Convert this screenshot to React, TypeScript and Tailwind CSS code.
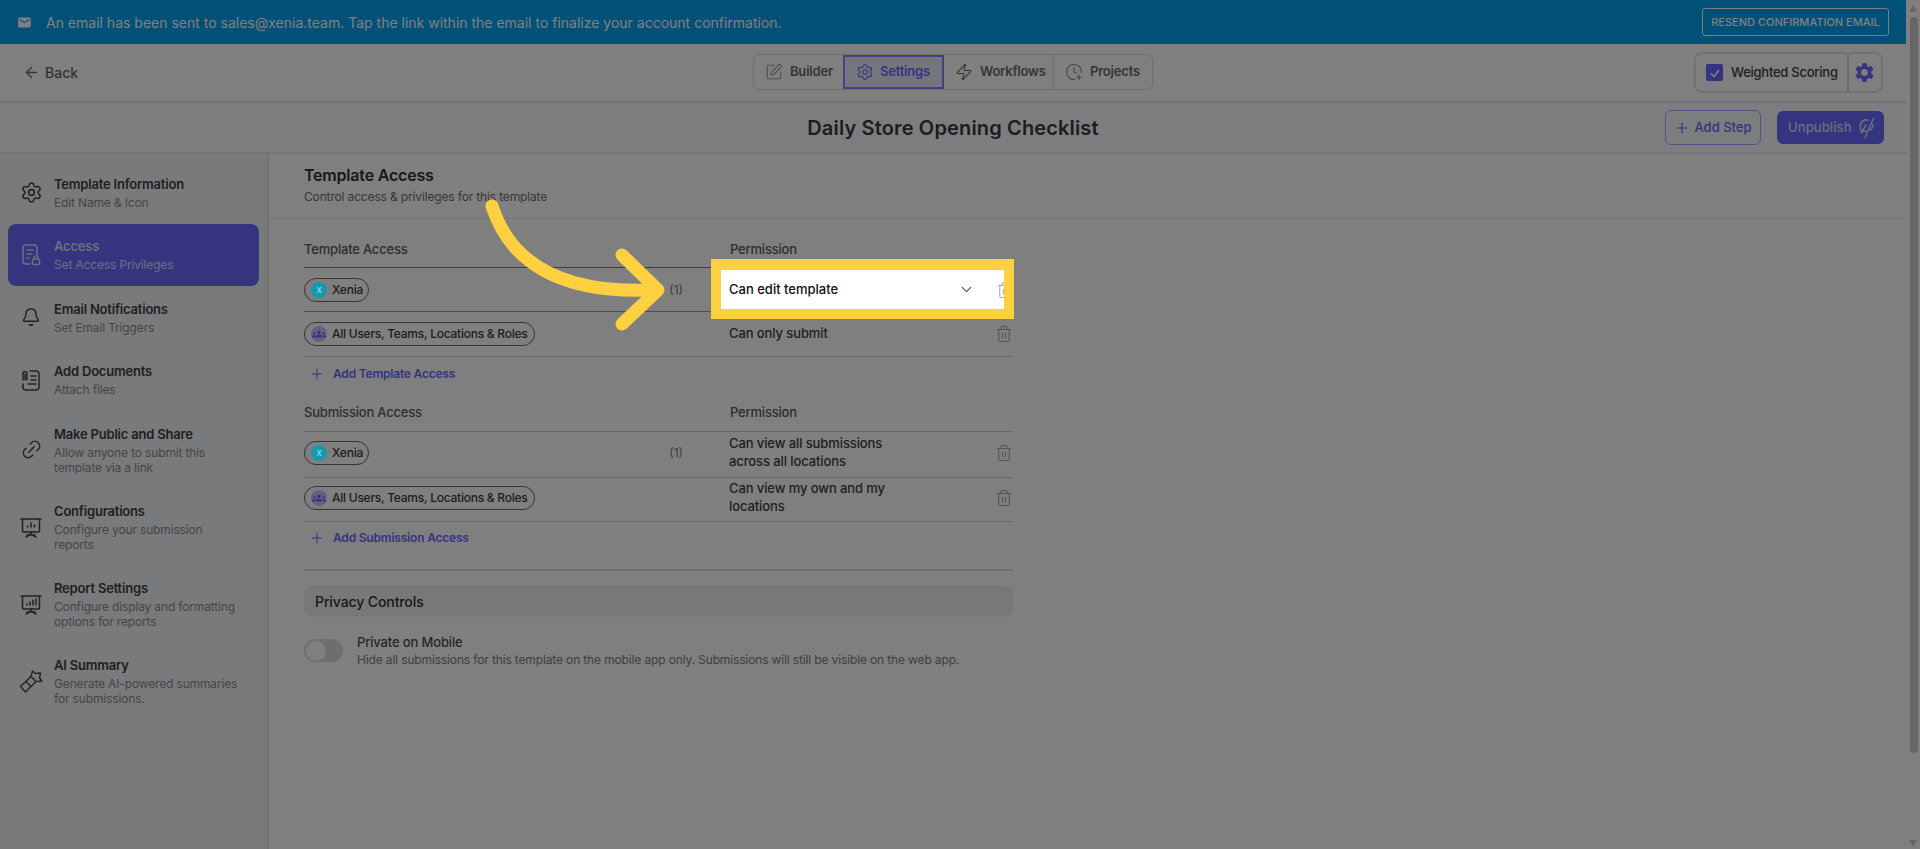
import { ArrowLeft, Bell, ChevronDown, ClockPlus, Link2, Plus, Settings, SquarePen, Trash2, Zap } from "lucide-react";
import { MdEmail, MdGroups, MdSettings } from "react-icons/md";

const font = { fontFamily: "Inter, 'Noto Sans', sans-serif" };

const IconAccess = () => (
  <svg width="22" height="24" viewBox="0 0 22 24" fill="none" stroke="currentColor" strokeWidth="1.5" strokeLinecap="round" strokeLinejoin="round">
    <path d="M10 21H6a3 3 0 0 1-3-3V5a3 3 0 0 1 3-3h8a3 3 0 0 1 3 3v7" />
    <path d="M7 7h6M7 11h5M7 15h2" />
    <rect x="12.5" y="16" width="7" height="5.5" rx="1.2" />
    <path d="M14 16v-1a2 2 0 0 1 4 0v1" />
  </svg>
);

const IconDocs = () => (
  <svg width="22" height="24" viewBox="0 0 22 24" fill="none" stroke="currentColor" strokeWidth="1.5" strokeLinecap="round" strokeLinejoin="round">
    <path d="M10 3h6a3 3 0 0 1 3 3v13a3 3 0 0 1-3 3H6a3 3 0 0 1-3-3v-3" />
    <path d="M3 12V5.5a2 2 0 0 1 4 0V11a1 1 0 0 1-2 0V6" />
    <path d="M11 8h5M11 12h5M8 16h8" />
  </svg>
);

const IconBoard = ({ bars }: { bars: string }) => (
  <svg width="24" height="24" viewBox="0 0 24 24" fill="none" stroke="currentColor" strokeWidth="1.5" strokeLinecap="round" strokeLinejoin="round">
    <path d="M2 4h20M3.5 4v12a1 1 0 0 0 1 1h15a1 1 0 0 0 1-1V4" />
    <path d="M12 17v2M12 19l-5 3M12 19l5 3M8 20h8" />
    <path d={bars} />
  </svg>
);

const IconRibbon = () => (
  <svg width="24" height="24" viewBox="0 0 24 24" fill="none" stroke="currentColor" strokeWidth="1.4" strokeLinejoin="round">
    <path d="M1.5 17.5 12 7.5l5 5L6.5 23Z" />
    <path d="M7 12.5l5 5" />
    <path d="M12 7.5 13.5 2l3 2.5 5-.5-1 5 2.5 3-5 .5" />
  </svg>
);

const IconFeatherOff = () => (
  <svg width="20" height="22" viewBox="0 0 20 22" fill="none" stroke="currentColor" strokeWidth="1.5" strokeLinecap="round" strokeLinejoin="round">
    <path d="M11 3.2a6 6 0 0 0-7 3c-1.2 2.6-.8 5.6.2 8 1.8.4 3.6.2 5-.4" />
    <path d="M4.5 15.5 9 8" />
    <path d="M16.5 1.5 8 20.5M16 7.5a7 7 0 0 1-2.5 5.5" />
  </svg>
);

const sideItems = [
  { title: "Template Information", sub: ["Edit Name & Icon"], icon: <Settings size={23} strokeWidth={1.6} /> },
  { title: "Access", sub: ["Set Access Privileges"], icon: <IconAccess />, active: true },
  { title: "Email Notifications", sub: ["Set Email Triggers"], icon: <Bell size={20} strokeWidth={1.8} /> },
  { title: "Add Documents", sub: ["Attach files"], icon: <IconDocs /> },
  { title: "Make Public and Share", sub: ["Allow anyone to submit this", "template via a link"], icon: <Link2 size={23} strokeWidth={1.5} className="-rotate-45" /> },
  { title: "Configurations", sub: ["Configure your submission", "reports"], icon: <IconBoard bars="M8.5 12v-1M12 12V8M15.5 12v-2" /> },
  { title: "Report Settings", sub: ["Configure display and formatting", "options for reports"], icon: <IconBoard bars="M8 13v-1M11 13v-3M14 13V8M17 13V7" /> },
  { title: "AI Summary", sub: ["Generate AI-powered summaries", "for submissions."], icon: <IconRibbon /> },
];

function XeniaChip() {
  return (
    <div className="inline-flex h-[24px] items-center gap-[5px] rounded-[12px] border-[1.5px] border-[#666] pl-[6px] pr-[5px] text-[12px] font-medium tracking-[-0.2px] text-[#3a3a3a]">
      <span className="relative z-20 flex h-[16px] w-[16px] items-center justify-center rounded-full bg-[#149aaf] text-[8px] font-semibold text-[#8fd0da]">X</span>
      Xenia
    </div>
  );
}

function AllChip() {
  return (
    <div className="inline-flex h-[24px] items-center gap-[5px] rounded-[12px] border-[1.5px] border-[#666] pl-[6px] pr-[6px] text-[12px] font-medium tracking-[-0.25px] text-[#3a3a3a]">
      <span className="flex h-[16px] w-[16px] items-center justify-center rounded-full bg-[#c5c2ff] text-[#6868fe]">
        <MdGroups size={14} />
      </span>
      All Users, Teams, Locations &amp; Roles
    </div>
  );
}

function Row({ chip, count, children, h, border = "border-[#d0d0d0]" }: { chip: React.ReactNode; count?: boolean; children: React.ReactNode; h: string; border?: string }) {
  return (
    <div className={`flex items-center border-b ${border} ${h}`}>
      <div className="flex w-[379px] items-center justify-between">
        {chip}
        {count && <span className="text-[12px] text-[#777]">(1)</span>}
      </div>
      <div className="-mt-[2px] ml-[46px] flex-1 text-[13px] font-medium leading-[18px] tracking-[-0.1px] text-[#404040]">{children}</div>
      <Trash2 size={18} strokeWidth={1.5} className="text-[#aaa]" />
    </div>
  );
}

function AddLink({ label, h }: { label: string; h: string }) {
  return (
    <div className={`flex items-center gap-[8px] pl-[5px] text-[12px] font-semibold tracking-[-0.2px] text-[#6868fe] ${h}`}>
      <Plus size={16} strokeWidth={1.6} />
      {label}
    </div>
  );
}

function TableHead({ left, h, border }: { left: string; h: string; border: string }) {
  return (
    <div className={`flex items-end border-b text-[13px] font-medium tracking-[-0.2px] text-[#5a5a5a] ${h} ${border}`}>
      <span className="w-[426px]">{left}</span>
      <span>Permission</span>
    </div>
  );
}

export default function App() {
  return (
    <div style={font} className="relative flex h-[849px] w-[1920px] overflow-hidden bg-white">
      <div className="flex w-[1906px] flex-col">
        {/* banner */}
        <div className="flex h-[44px] items-center justify-between bg-[#00a0ee] pl-[17px] pr-[17px] text-white">
          <div className="flex items-center gap-[14px] text-[14px]">
            <MdEmail size={15} />
            An email has been sent to sales@xenia.team. Tap the link within the email to finalize your account confirmation.
          </div>
          <div className="flex h-[28px] w-[187px] items-center justify-center rounded-[3px] border border-white text-[11px] font-medium">
            RESEND CONFIRMATION EMAIL
          </div>
        </div>

        {/* top bar */}
        <div className="grid h-[59px] grid-cols-[1fr_auto_1fr] items-center border-b-2 border-[#e4e4e4] px-[23px]">
          <div className="flex items-center gap-[5px] text-[14px] font-medium text-[#666]">
            <ArrowLeft size={17} strokeWidth={1.8} />
            Back
          </div>
          <div className="-mt-[1px] flex h-[36px] items-stretch rounded-[6px] border border-[#dcdcdc] text-[13px] font-semibold tracking-[-0.2px] text-[#6b6b6b]">
            <div className="flex w-[89px] items-center gap-[7px] pl-[11px]">
              <SquarePen size={18} strokeWidth={1.5} className="text-[#a0a0a0]" />
              Builder
            </div>
            <div className="flex w-[101px] items-center gap-[6px] border-2 border-[#8a86ff] bg-[#ebebff] pl-[11px] text-[#6868fe]">
              <Settings size={18} strokeWidth={1.5} />
              Settings
            </div>
            <div className="flex w-[110px] items-center gap-[7px] border-r border-[#dcdcdc] pl-[11px]">
              <Zap size={18} strokeWidth={1.5} />
              Workflows
            </div>
            <div className="flex w-[98px] items-center gap-[7px] pl-[11px]">
              <ClockPlus size={18} strokeWidth={1.5} className="text-[#909090]" />
              Projects
            </div>
          </div>
          <div className="flex justify-end">
            <div className="flex h-[41px] w-[189px] items-center rounded-[8px] border-2 border-[#e4e4e4]">
              <div className="ml-[10px] flex h-[17px] w-[17px] items-center justify-center rounded-[2px] bg-[#6868fe] text-white">
                <svg width="12" height="12" viewBox="0 0 12 12" fill="none" stroke="currentColor" strokeWidth="1.5"><path d="M2 6.5 5 9.5 10 3" /></svg>
              </div>
              <span className="ml-[8px] w-[116px] text-[13px] font-medium tracking-[-0.25px] text-[#404040]">Weighted Scoring</span>
              <div className="flex h-full flex-1 items-center justify-center border-l-2 border-[#d6d6d6] pr-[1px] text-[#6868fe]">
                <MdSettings size={23} />
              </div>
            </div>
          </div>
        </div>

        {/* title bar */}
        <div className="grid h-[51px] grid-cols-[1fr_auto_1fr] items-center border-b-2 border-[#e4e8ee] bg-[#f8fbff] px-[22px]">
          <div />
          <div className="text-[20px] font-semibold tracking-[0.15px] text-[#3a3a3a]">Daily Store Opening Checklist</div>
          <div className="flex items-center justify-end gap-[16px]">
            <div className="flex h-[35px] w-[96px] items-center justify-center gap-[4px] rounded-[6px] border border-[#a5a5ff] text-[13px] font-medium text-[#6868fe]">
              <Plus size={16} strokeWidth={1.8} />
              Add Step
            </div>
            <div className="flex h-[33px] w-[107px] items-center gap-[5px] rounded-[6px] bg-[#6868fe] pl-[11px] text-[13px] font-medium tracking-[0.1px] text-[#dcdcff]">
              Unpublish
              <IconFeatherOff />
            </div>
          </div>
        </div>

        <div className="flex flex-1">
          {/* sidebar */}
          <div className="w-[269px] border-r-2 border-[#e6e6e6] bg-[#f2f5f9] pl-[8px] pr-[8px] pt-[7px]">
            {sideItems.map((it) => (
              <div
                key={it.title}
                className={`flex items-center ${it.sub.length > 1 ? "h-[77px]" : "h-[62.5px]"} ${it.active ? "rounded-[8px] bg-[#6868fe] text-[#dcdcff]" : "text-[#444]"}`}
              >
                <div className="flex w-[46px] justify-center">{it.icon}</div>
                <div>
                  <div className={`mb-[2px] text-[13px] font-semibold leading-[18px] tracking-[-0.2px] ${it.active ? "" : "text-[#404040]"}`}>{it.title}</div>
                  {it.sub.map((s) => (
                    <div key={s} className={`text-[12px] leading-[15px] tracking-[-0.15px] ${it.active ? "" : "text-[#8c8c8c]"}`}>{s}</div>
                  ))}
                </div>
              </div>
            ))}
          </div>

          {/* content */}
          <div className="flex-1">
            <div className="flex h-[65px] flex-col justify-center border-b border-[#e6e6e6] pb-[2px] pl-[35px]">
              <div className="mb-[2px] text-[16px] font-semibold leading-[22px] tracking-[-0.2px] text-[#303030]">Template Access</div>
              <div className="text-[12px] leading-[18px] tracking-[-0.15px] text-[#707070]">Control access &amp; privileges for this template</div>
            </div>

            <div className="ml-[35px] w-[709px]">
              <TableHead left="Template Access" h="h-[49px] pb-[8px]" border="border-[#7d7d7d]" />
              <Row chip={<XeniaChip />} count h="h-[44px]" border="border-[#9a9a9a]">Can edit template</Row>
              <Row chip={<AllChip />} h="h-[45px]">Can only submit</Row>
              <AddLink label="Add Template Access" h="h-[37px] pb-[4px]" />

              <TableHead left="Submission Access" h="h-[38px] pb-[9px]" border="border-[#d0d0d0]" />
              <Row chip={<XeniaChip />} count h="h-[46px] pb-[3px]">Can view all submissions<br />across all locations</Row>
              <Row chip={<AllChip />} h="h-[44px] pb-[3px]">Can view my own and my<br />locations</Row>
              <AddLink label="Add Submission Access" h="h-[33px] pb-[2px]" />

              <div className="mt-[14px] border-t-2 border-[#dedede]" />
              <div className="mt-[15px] flex h-[31px] items-center rounded-[8px] bg-[#f0f0f0] pl-[11px] text-[14px] font-medium tracking-[-0.1px] text-[#303030]">Privacy Controls</div>

              <div className="mt-[16px] flex items-center">
                <div className="flex h-[23px] w-[39px] items-center rounded-full bg-[#dcdcdc] pl-[2px]">
                  <div className="h-[20px] w-[20px] rounded-full bg-white" />
                </div>
                <div className="ml-[14px]">
                  <div className="text-[13px] font-medium leading-[18px] tracking-[-0.15px] text-[#505050]">Private on Mobile</div>
                  <div className="text-[12px] leading-[17px] tracking-[-0.14px] text-[#808080]">Hide all submissions for this template on the mobile app only. Submissions will still be visible on the web app.</div>
                </div>
              </div>
            </div>
          </div>
        </div>
      </div>

      {/* scrollbar */}
      <div className="flex w-[14px] flex-col items-center bg-white pt-[5px]">
        <div className="h-0 w-0 border-x-[4px] border-b-[7px] border-x-transparent border-b-[#ccc]" />
        <div className="ml-[2px] mt-[5px] h-[736px] w-[8px] rounded-full bg-[#ccc]" />
        <div className="mb-[2px] mt-auto h-0 w-0 border-x-[4px] border-t-[7px] border-x-transparent border-t-[#ccc]" />
      </div>

      {/* dim layer of the walkthrough */}
      <div className="absolute inset-0 z-10 bg-black/50" />

      {/* highlighted dropdown */}
      <div className="absolute left-[711px] top-[259px] z-20 h-[60px] w-[303px] border-x-[10px] border-b-[10px] border-t-[11px] border-[#ffd140] bg-white">
        <div className="flex h-full items-center overflow-hidden pl-[8px] text-[13px] font-medium text-[#111]">
          <span className="w-[229px] shrink-0">Can edit template</span>
          <ChevronDown size={17} strokeWidth={1.8} className="shrink-0 text-[#555]" />
          <Trash2 size={18} strokeWidth={1.5} className="ml-[21px] shrink-0 text-[#aaa]" />
        </div>
      </div>

      {/* arrow */}
      <svg className="absolute left-0 top-0 z-30" width="1920" height="849" fill="none" stroke="#ffd140" strokeWidth="13" strokeLinecap="round" strokeLinejoin="round">
        <path d="M492 206C510 262 560 294 652 290" />
        <path d="M622 255 658 290 622 324" />
      </svg>
    </div>
  );
}
